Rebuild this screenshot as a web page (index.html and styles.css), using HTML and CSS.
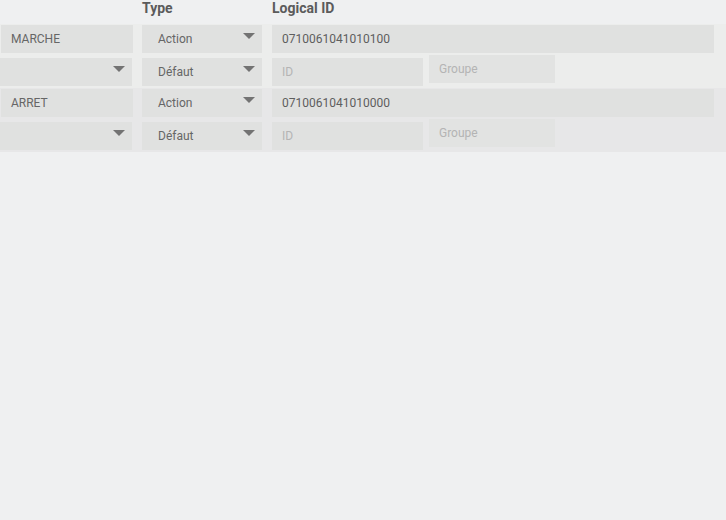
FILE: index.html
```html
<!DOCTYPE html>
<html lang="fr">
<head>
<meta charset="utf-8">
<title>Actions</title>
<link rel="stylesheet" href="styles.css">
</head>
<body>
<div class="page">
  <div class="header">
    <span class="h-type">Type</span>
    <span class="h-lid">Logical ID</span>
  </div>

  <div class="band band-odd">
    <div class="row row-main">
      <div class="field f-name">MARCHE</div>
      <div class="field f-type select">Action<span class="caret"></span></div>
      <div class="field f-lid">0710061041010100</div>
    </div>
    <div class="row row-sub">
      <div class="field f-name-sel select"><span class="caret"></span></div>
      <div class="field f-type select">Défaut<span class="caret"></span></div>
      <div class="field f-id placeholder">ID</div>
      <div class="field f-group placeholder">Groupe</div>
    </div>
  </div>

  <div class="band band-even">
    <div class="row row-main">
      <div class="field f-name">ARRET</div>
      <div class="field f-type select">Action<span class="caret"></span></div>
      <div class="field f-lid">0710061041010000</div>
    </div>
    <div class="row row-sub">
      <div class="field f-name-sel select"><span class="caret"></span></div>
      <div class="field f-type select">Défaut<span class="caret"></span></div>
      <div class="field f-id placeholder">ID</div>
      <div class="field f-group placeholder">Groupe</div>
    </div>
  </div>
</div>
</body>
</html>
```

FILE: styles.css
```css
html, body {
  margin: 0;
  padding: 0;
  height: 100%;
  background: #eff0f1;
  font-family: Roboto, "Liberation Sans", sans-serif;
}

.page {
  width: 726px;
}

.header {
  display: flex;
  height: 24px;
  font-size: 14px;
  line-height: 16px;
  font-weight: 700;
  color: #5b5b5b;
}

.h-type {
  margin-left: 142px;
  width: 130px;
}

.band {
  padding: 1px 0 2px 0;
}

.band-odd {
  background: #ecedec;
}

.band-even {
  background: #e7e7e8;
}

.row {
  display: flex;
  align-items: flex-start;
}

.row-sub {
  margin-top: 2px;
}

.field {
  position: relative;
  box-sizing: border-box;
  height: 28px;
  line-height: 28px;
  padding-left: 10px;
  background: #e0e1e0;
  font-size: 12px;
  color: #666666;
  white-space: nowrap;
}

.placeholder {
  color: #b4b4b4;
}

.f-name {
  margin-left: 1px;
  width: 132px;
}

.f-type {
  margin-left: 9px;
  width: 120px;
  padding-left: 16px;
}

.f-lid {
  margin-left: 10px;
  width: 442px;
  color: #5e5e5e;
}

.row-sub .f-name-sel,
.row-sub .f-type,
.row-sub .f-id {
  margin-top: 3px;
}

.f-name-sel {
  width: 132px;
}

.row-sub .f-type {
  margin-left: 10px;
}

.f-id {
  margin-left: 10px;
  width: 151px;
}

.f-group {
  margin-left: 6px;
  width: 126px;
  background: #e2e3e2;
}

.caret {
  position: absolute;
  right: 7px;
  top: 8px;
  width: 0;
  height: 0;
  border-left: 6px solid transparent;
  border-right: 6px solid transparent;
  border-top: 6px solid #737373;
}
```
